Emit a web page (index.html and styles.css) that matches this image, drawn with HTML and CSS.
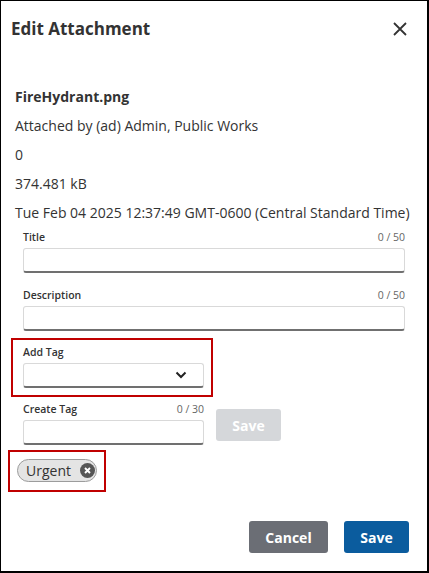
FILE: index.html
```html
<!DOCTYPE html>
<html lang="en">
<head>
  <meta charset="UTF-8">
  <meta name="viewport" content="width=device-width, initial-scale=1.0">
  <title>Edit Attachment</title>
  <link rel="stylesheet" href="styles.css">
</head>
<body>
  <div class="dialog">
    <div class="dialog-header">
      <h1>Edit Attachment</h1>
      <button class="close-btn" type="button" aria-label="Close">
        <svg width="16" height="16" viewBox="0 0 16 16">
          <path d="M2 2 L14 14 M14 2 L2 14" stroke="#333" stroke-width="1.8" fill="none" />
        </svg>
      </button>
    </div>

    <div class="details">
      <div class="file-name">FireHydrant.png</div>
      <div>Attached by (ad) Admin, Public Works</div>
      <div>0</div>
      <div>374.481 kB</div>
      <div>Tue Feb 04 2025 12:37:49 GMT-0600 (Central Standard Time)</div>
    </div>

    <form class="form">
      <div class="field">
        <div class="field-head">
          <label for="title">Title</label>
          <span class="count">0 / 50</span>
        </div>
        <input type="text" id="title" />
      </div>
      <div class="field">
        <div class="field-head">
          <label for="description">Description</label>
          <span class="count">0 / 50</span>
        </div>
        <input type="text" id="description" />
      </div>

      <div class="tag-box">
        <div class="field-head">
          <label>Add Tag</label>
        </div>
        <div class="select">
          <svg width="12" height="8" viewBox="0 0 12 8">
            <path d="M1.5 1.5 L6 6 L10.5 1.5" stroke="#222" stroke-width="2" fill="none" />
          </svg>
        </div>
      </div>

      <div class="create-row">
        <div class="field small">
          <div class="field-head">
            <label for="newTag">Create Tag</label>
            <span class="count">0 / 30</span>
          </div>
          <input type="text" id="newTag" />
        </div>
        <button class="btn btn-disabled" type="button" disabled>Save</button>
      </div>

      <div class="chip-box">
        <span class="chip">
          Urgent
          <span class="chip-remove">
            <svg width="15" height="15" viewBox="0 0 15 15">
              <circle cx="7.5" cy="7.5" r="7.5" fill="#555" />
              <path d="M5 5 L10 10 M10 5 L5 10" stroke="#fff" stroke-width="1.9" />
            </svg>
          </span>
        </span>
      </div>
    </form>

    <div class="dialog-footer">
      <button class="btn btn-cancel" type="button">Cancel</button>
      <button class="btn btn-save" type="button">Save</button>
    </div>
  </div>
</body>
</html>
```

FILE: styles.css
```css
body {
  margin: 0;
  font-family: "Open Sans", Arial, sans-serif;
  color: #333;
  background: #fff;
}

.dialog {
  width: 429px;
  height: 573px;
  box-sizing: border-box;
  border: 1px solid #000;
  border-right-width: 2px;
  border-bottom-width: 2px;
  display: flex;
  flex-direction: column;
}

.dialog-header {
  display: flex;
  justify-content: space-between;
  align-items: center;
  padding: 16px 19px 0 10px;
}

.dialog-header h1 {
  margin: 0;
  font-size: 17px;
  font-weight: 700;
  line-height: 24px;
  color: #333;
}

.close-btn {
  background: none;
  border: none;
  padding: 0;
  width: 16px;
  height: 16px;
  cursor: pointer;
}

.close-btn svg {
  display: block;
}

.details {
  margin-top: 41px;
  padding: 0 14px;
  font-size: 14px;
  line-height: 29px;
}

.file-name {
  font-weight: 700;
}

.form {
  padding: 0 22px;
  margin-top: 3px;
}

.field-head {
  display: flex;
  justify-content: space-between;
  font-size: 10.5px;
  line-height: 15px;
  margin-bottom: 3px;
}

.field-head label {
  font-weight: 600;
  color: #333;
}

.count {
  color: #666;
}

.field input {
  display: block;
  width: 100%;
  height: 25px;
  box-sizing: border-box;
  border: 1px solid #d9d9d9;
  border-bottom: 2px solid #707070;
  border-radius: 3px;
  font-family: inherit;
  font-size: 14px;
}

.field + .field {
  margin-top: 15px;
}

.tag-box {
  margin: 7px 0 0 -12px;
  width: 202px;
  box-sizing: border-box;
  border: 2px solid #c00000;
  padding: 5px 7px 7px 10px;
}

.select {
  height: 25px;
  box-sizing: border-box;
  border: 1px solid #d9d9d9;
  border-bottom: 2px solid #707070;
  border-radius: 3px;
  display: flex;
  align-items: center;
  justify-content: flex-end;
  padding-right: 16px;
}

.select svg {
  display: block;
}

.create-row {
  display: flex;
  align-items: flex-start;
  margin-top: 5px;
}

.field.small {
  width: 181px;
}

.btn {
  height: 32px;
  border: none;
  border-radius: 3px;
  font-family: inherit;
  font-size: 14px;
  font-weight: 700;
  color: #fff;
  cursor: pointer;
}

.btn-disabled {
  width: 65px;
  margin: 7px 0 0 12px;
  background: #d5d7da;
  cursor: default;
}

.chip-box {
  margin: 5px 0 0 -15px;
  width: 98px;
  height: 42px;
  box-sizing: border-box;
  border: 2px solid #c00000;
  padding: 7px 0 0 7px;
}

.chip {
  display: inline-flex;
  align-items: center;
  gap: 9px;
  height: 23px;
  box-sizing: border-box;
  padding: 0 1px 0 8px;
  border: 1px solid #9c9c9c;
  border-radius: 12px;
  background: #e4e4e4;
  font-size: 14px;
  color: #333;
}

.chip-remove svg {
  display: block;
}

.dialog-footer {
  margin-top: auto;
  display: flex;
  justify-content: flex-end;
  gap: 16px;
  padding: 0 18px 18px 0;
}

.btn-cancel {
  width: 79px;
  background: #6b6e75;
}

.btn-save {
  width: 65px;
  background: #0b5c9e;
}
```
